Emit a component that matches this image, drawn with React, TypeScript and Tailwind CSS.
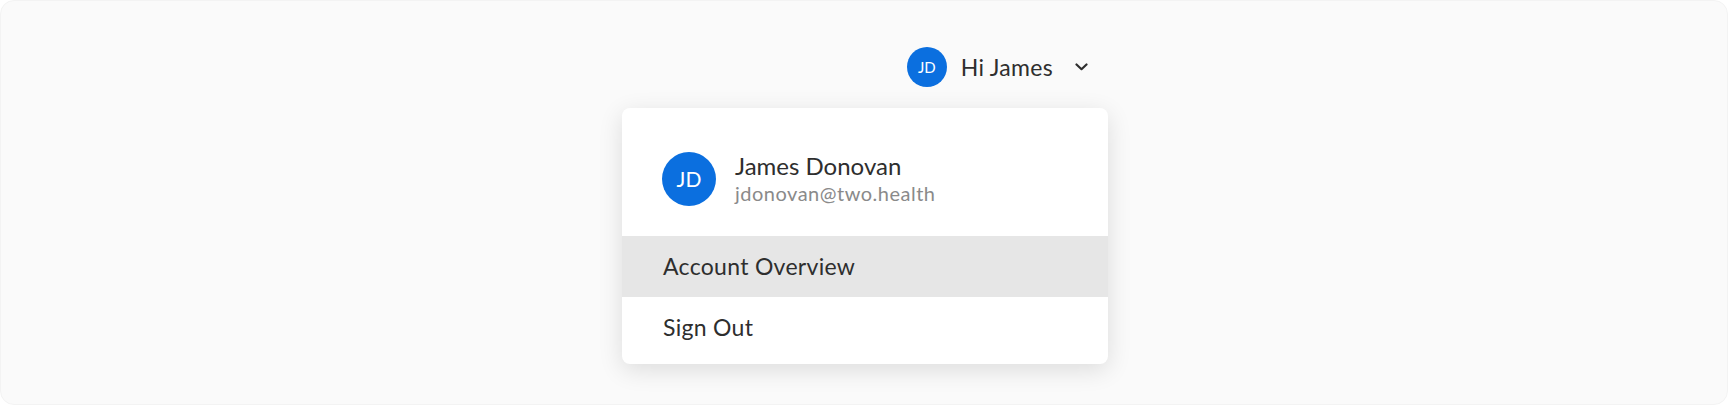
import React from "react";

export default function App() {
  return (
    <div className="w-[1728px] h-[405px] bg-white" style={{ fontFamily: "Lato, 'Open Sans', sans-serif" }}>
      <div className="w-full h-full rounded-[14px] border border-[#f3f3f3] bg-[#fafafa] flex">
        <div className="ml-[621px] mt-[46px] w-[486px] flex flex-col">
          <div className="flex items-center justify-end pr-[20px] h-[40px]">
            <div className="w-[40px] h-[40px] rounded-full bg-[#0b6fdf] flex items-center justify-center text-white text-[15px]">
              JD
            </div>
            <span className="ml-[14px] text-[23px] tracking-[0.3px] text-[#2e2e2e] leading-none">Hi James</span>
            <svg className="ml-[22px]" width="13" height="8" viewBox="0 0 13 8" fill="none">
              <path d="M1.5 1.5 L6.5 6.2 L11.5 1.5" stroke="#2e2e2e" strokeWidth="2.2" strokeLinecap="round" strokeLinejoin="round" />
            </svg>
          </div>
          <div className="mt-[21px] bg-white rounded-[8px] shadow-[0_6px_24px_rgba(0,0,0,0.12)] overflow-hidden pb-[6px]">
            <div className="flex items-center pl-[40px] pt-[44px] pb-[30px]">
              <div className="w-[54px] h-[54px] rounded-full bg-[#0b6fdf] flex items-center justify-center text-white text-[21px]">
                JD
              </div>
              <div className="ml-[19px] flex flex-col">
                <span className="text-[24px] leading-[28px] text-[#2e2e2e]">James Donovan</span>
                <span className="text-[20px] tracking-[0.5px] leading-[26px] text-[#8a8a8a]">jdonovan@two.health</span>
              </div>
            </div>
            <div className="h-[61px] bg-[#e6e6e6] flex items-center pl-[41px] text-[23px] tracking-[0.3px] text-[#2e2e2e]">
              Account Overview
            </div>
            <div className="h-[61px] flex items-center pl-[41px] text-[23px] tracking-[0.3px] text-[#2e2e2e]">
              Sign Out
            </div>
          </div>
        </div>
      </div>
    </div>
  );
}
